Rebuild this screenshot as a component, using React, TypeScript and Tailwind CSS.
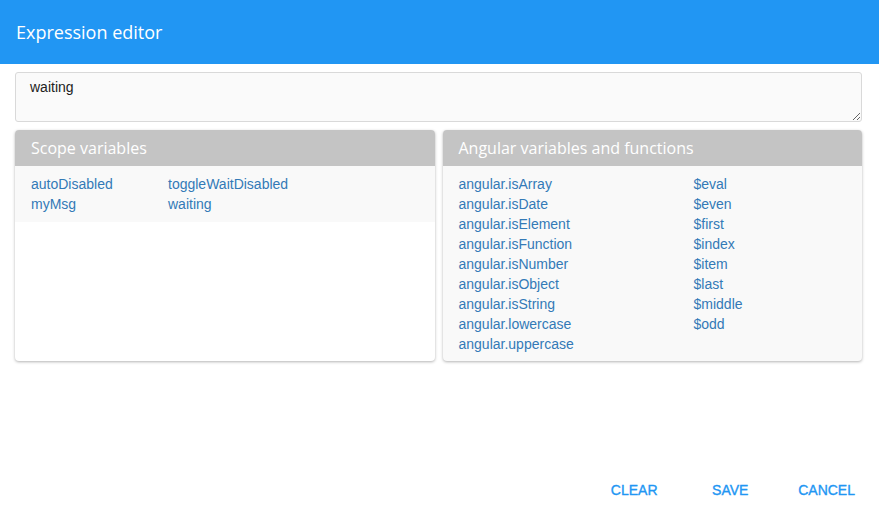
import React from "react";

const scope = [
  ["autoDisabled", "toggleWaitDisabled"],
  ["myMsg", "waiting"],
];

const angularLeft = [
  "angular.isArray",
  "angular.isDate",
  "angular.isElement",
  "angular.isFunction",
  "angular.isNumber",
  "angular.isObject",
  "angular.isString",
  "angular.lowercase",
  "angular.uppercase",
];
const angularRight = ["$eval", "$even", "$first", "$index", "$item", "$last", "$middle", "$odd"];

const itemFont = { fontFamily: '"Liberation Sans", Arial, sans-serif' };

export default function App() {
  return (
    <div className="flex h-[516px] w-[879px] flex-col bg-white">
      <div className="flex h-16 shrink-0 items-center bg-[#2196f3] px-4 pb-[1px]">
        <h1
          className="text-[18px] leading-none text-white"
          style={{ fontFamily: '"Open Sans", sans-serif' }}
        >
          Expression editor
        </h1>
      </div>

      <div className="pl-[15px] pr-[17px] pt-2">
        <textarea
          readOnly
          defaultValue="waiting"
          className="block h-[50px] w-full resize-y rounded-[3px] border border-[#d9d9d9] bg-[#fafafa] px-[14px] py-[4px] text-[14px] leading-5 text-[#222] outline-none"
          style={itemFont}
        />
      </div>

      <div className="grid grid-cols-2 gap-2 pl-[15px] pr-[17px] pt-[8px]">
        <div className="flex flex-col overflow-hidden rounded-[4px] bg-white shadow-[0_1px_3px_rgba(0,0,0,0.3)]">
          <div
            className="flex h-9 items-center bg-[#c4c4c4] px-4 text-[16px] text-white"
            style={{ fontFamily: '"Open Sans", sans-serif' }}
          >
            Scope variables
          </div>
          <div className="grid grid-cols-[137px_1fr] bg-[#f9f9f9] px-4 py-2 text-[14px] leading-5 text-[#337ab7]" style={itemFont}>
            {scope.map(([a, b]) => (
              <React.Fragment key={a}>
                <span>{a}</span>
                <span>{b}</span>
              </React.Fragment>
            ))}
          </div>
        </div>

        <div className="flex flex-col overflow-hidden rounded-[4px] bg-[#f9f9f9] shadow-[0_1px_3px_rgba(0,0,0,0.3)]">
          <div
            className="flex h-9 items-center bg-[#c4c4c4] px-4 text-[16px] text-white"
            style={{ fontFamily: '"Open Sans", sans-serif' }}
          >
            Angular variables and functions
          </div>
          <div className="grid grid-cols-[235px_1fr] px-4 pt-2 pb-[7px] text-[14px] leading-5 text-[#337ab7]" style={itemFont}>
            <div className="flex flex-col">
              {angularLeft.map((x) => (
                <span key={x}>{x}</span>
              ))}
            </div>
            <div className="flex flex-col">
              {angularRight.map((x) => (
                <span key={x}>{x}</span>
              ))}
            </div>
          </div>
        </div>
      </div>

      <div className="flex-1" />

      <div className="flex justify-end gap-2 px-2 py-2">
        {["CLEAR", "SAVE", "CANCEL"].map((b) => (
          <button
            key={b}
            className="h-9 min-w-[88px] rounded-[2px] px-4 text-[14px] font-normal text-[#2196f3] [-webkit-text-stroke:0.35px_#2196f3]"
            style={itemFont}
          >
            {b}
          </button>
        ))}
      </div>
    </div>
  );
}
